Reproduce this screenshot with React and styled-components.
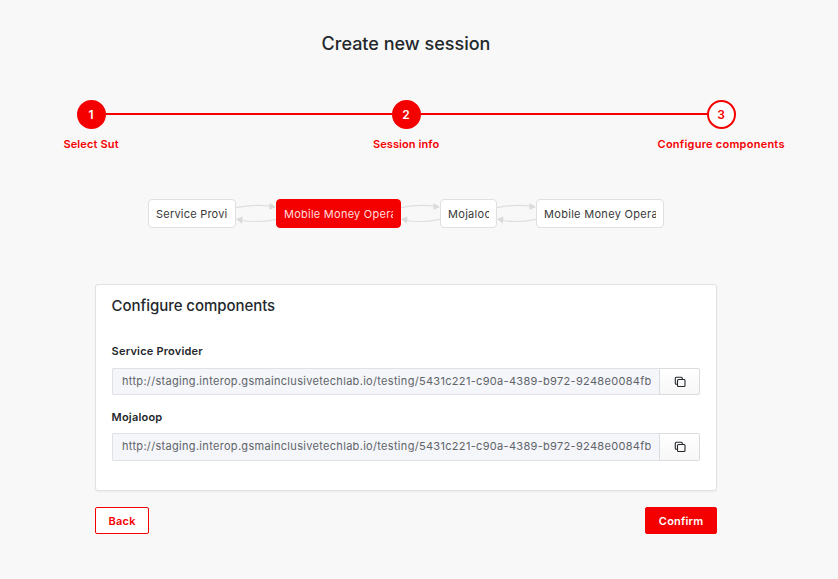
import React from "react";
import styled, { createGlobalStyle } from "styled-components";

const GlobalStyle = createGlobalStyle`
  * { box-sizing: border-box; }
  html { background: #f8f8f8; }
  body { margin: 0; overflow: hidden; font-family: Inter, "Open Sans", sans-serif; color: #23282c; }
`;

const Page = styled.main`
  width: 812px;
  height: 579px;
  display: flex;
  flex-direction: column;
  align-items: center;
`;

const Text = styled.span`
  display: block;
  white-space: nowrap;
  letter-spacing: ${(p) => p.$ls || 0}px;
  margin-right: ${(p) => -(p.$ls || 0)}px;
`;

const Title = styled.h1`
  margin: 32px 0 0;
  font-size: 18px;
  line-height: 24px;
  font-weight: 500;
`;

const Steps = styled.div`
  width: 659px;
  height: 53px;
  margin-top: 44px;
  display: flex;
`;

const Step = styled.div`
  width: 29px;
  flex: none;
  display: flex;
  flex-direction: column;
  align-items: center;
`;

const Circle = styled.div`
  width: 29px;
  height: 29px;
  flex: none;
  border-radius: 50%;
  border: 2px solid #f50000;
  background: ${(p) => (p.$current ? "#fff" : "#f50000")};
  color: ${(p) => (p.$current ? "#f50000" : "#fff")};
  display: flex;
  align-items: center;
  justify-content: center;
  font-size: 12px;
  font-weight: 600;
`;

const StepLabel = styled.div`
  margin-top: 7px;
  font-size: 11px;
  line-height: 16px;
  font-weight: 600;
  color: #f50000;
`;

const Line = styled.div`
  flex: 1;
  height: 2px;
  margin-top: 13px;
  background: #f50000;
`;

const Flow = styled.div`
  display: flex;
  margin-top: 46px;
`;

const Node = styled.div`
  width: ${(p) => p.$w}px;
  height: 29px;
  padding: 0 7px;
  border: 1px solid ${(p) => (p.$active ? "#f50000" : "#e0e0e0")};
  border-radius: 4px;
  background: ${(p) => (p.$active ? "#f50000" : "#fff")};
  color: ${(p) => (p.$active ? "#ffdede" : "#383838")};
  font-size: 11px;
  line-height: 28px;
`;

const Clip = styled.div`
  overflow: hidden;
`;

const Arrows = styled.svg`
  display: block;
  flex: none;
`;

const Card = styled.section`
  width: 622px;
  height: 207px;
  margin-top: 56px;
  padding: 11px 16px 0 15.6px;
  background: #fff;
  border: 1px solid #dfe1e6;
  border-radius: 3px;
  box-shadow: 0 1px 2px rgba(0, 0, 0, 0.05);
`;

const CardTitle = styled.h2`
  margin: 0 0 27px;
  font-size: 15px;
  line-height: 20px;
  font-weight: 500;
`;

const Field = styled.div`
  height: 65.6px;
`;

const Label = styled.label`
  display: block;
  font-size: 11px;
  line-height: 16px;
  font-weight: 600;
`;

const InputGroup = styled.div`
  display: flex;
  width: 588px;
  height: 27.5px;
  margin-top: 8.6px;
`;

const UrlBox = styled.div`
  width: 548px;
  padding: 0 9px 0 9.4px;
  border: 1px solid #dfe1e5;
  border-right: 0;
  border-radius: 2px 0 0 2px;
  background: #f5f6fa;
  color: #606469;
  font-size: 11px;
  line-height: 24px;
`;

const CopyButton = styled.button`
  width: 41px;
  margin-left: -1px;
  padding: 1px 0 0 1px;
  border: 1px solid #dadce0;
  border-radius: 0 2px 2px 0;
  background: linear-gradient(#fff, #f7f7f7);
  color: #23282c;
  display: flex;
  align-items: center;
  justify-content: center;
`;

const Actions = styled.div`
  width: 622px;
  margin-top: 16px;
  display: flex;
  justify-content: space-between;
`;

const Button = styled.button`
  width: ${(p) => p.$w}px;
  height: 27px;
  padding: 1px 0 0;
  border: 1px solid #f50000;
  border-radius: 2px;
  background: ${(p) => (p.$primary ? "#f50000" : "#fff")};
  color: ${(p) => (p.$primary ? "#fff" : "#f50000")};
  font: 600 11px Inter, sans-serif;
  display: flex;
  align-items: center;
  justify-content: center;
`;

const STEPS = [
  { label: "Select Sut", ls: 0.15 },
  { label: "Session info", ls: 0.1 },
  { label: "Configure components", ls: 0.25 },
];

const NODES = [
  { label: "Service Provider", w: 88, ls: 0.22 },
  { label: "Mobile Money Operator", w: 125, ls: 0.25, active: true },
  { label: "Mojaloop", w: 57, ls: 0.3 },
  { label: "Mobile Money Operator", w: 128, ls: 0.3 },
];

const FIELDS = [
  { label: "Service Provider", ls: 0.2 },
  { label: "Mojaloop", ls: 0.2 },
];

const URL = "http://staging.interop.gsmainclusivetechlab.io/testing/5431c221-c90a-4389-b972-9248e0084fb8";

function FlowArrows({ width }) {
  return (
    <Arrows width={width} height="29" viewBox="0 0 40 29" preserveAspectRatio="none">
      <path d="M0 8.6Q17 4.9 35 7.2M40 20.3Q23 24 5 21.5" fill="none" stroke="#dedede" strokeWidth="1.2" />
      <path d="M33.5 4L40 8L33.3 10.7ZM6.7 17.5L0 20L6 24.8Z" fill="#dadada" />
    </Arrows>
  );
}

function CopyIcon() {
  return (
    <svg width="12" height="12" viewBox="0 0 12 12" fill="none" stroke="currentColor" strokeWidth="1.1">
      <rect x="3.5" y="3.5" width="7.5" height="7" rx="1" />
      <path d="M3.2 8.2H2.3Q1.3 8.2 1.3 7.2V2.3Q1.3 1.3 2.3 1.3H7.3Q8.3 1.3 8.3 2.3V3.2" />
    </svg>
  );
}

export default function App() {
  return (
    <>
      <GlobalStyle />
      <Page>
        <Title><Text>Create new session</Text></Title>
        <Steps>
          {STEPS.map((s, i) => (
            <React.Fragment key={s.label}>
              {i > 0 && <Line />}
              <Step>
                <Circle $current={i === 2}>{i + 1}</Circle>
                <StepLabel><Text $ls={s.ls}>{s.label}</Text></StepLabel>
              </Step>
            </React.Fragment>
          ))}
        </Steps>
        <Flow>
          {NODES.map((n, i) => (
            <React.Fragment key={i}>
              {i > 0 && <FlowArrows width={i === 1 ? 40 : 39} />}
              <Node $w={n.w} $active={n.active}>
                <Clip><Text $ls={n.ls}>{n.label}</Text></Clip>
              </Node>
            </React.Fragment>
          ))}
        </Flow>
        <Card>
          <CardTitle><Text $ls={-0.05}>Configure components</Text></CardTitle>
          {FIELDS.map((f) => (
            <Field key={f.label}>
              <Label><Text $ls={f.ls}>{f.label}</Text></Label>
              <InputGroup>
                <UrlBox><Clip><Text $ls={0.31}>{URL}</Text></Clip></UrlBox>
                <CopyButton aria-label="Copy"><CopyIcon /></CopyButton>
              </InputGroup>
            </Field>
          ))}
        </Card>
        <Actions>
          <Button $w={54}><Text $ls={0.2}>Back</Text></Button>
          <Button $w={72} $primary><Text $ls={0.2}>Confirm</Text></Button>
        </Actions>
      </Page>
    </>
  );
}
